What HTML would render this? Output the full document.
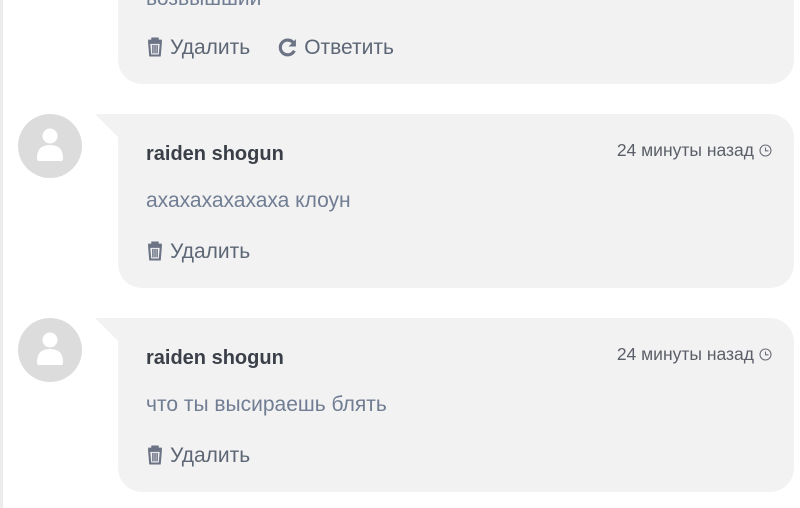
<!DOCTYPE html>
<html><head><meta charset="utf-8"><style>
*{margin:0;padding:0;box-sizing:border-box}
body{width:800px;height:508px;background:#fff;position:relative;overflow:hidden;font-family:"Liberation Sans",sans-serif}
.line{position:absolute;left:0;top:0;width:3px;height:508px;background:#ececec}
.card{position:absolute;left:118px;width:676px;background:#f2f2f3;border-radius:0 24px 24px 24px}
.notch{position:absolute;left:-23px;top:0;width:0;height:0;border-top:23px solid #f2f2f3;border-left:23px solid transparent}
.av{position:absolute;left:18px;width:64px;height:64px;border-radius:50%;background:#dcdcdc}
.av svg{position:absolute;left:18px;top:14px}
.name{position:absolute;left:28px;top:29px;font-size:20px;font-weight:bold;color:#3b3f48}
.time{position:absolute;right:22px;top:26px;font-size:17.5px;color:#5b5f67}
.time svg{vertical-align:-1px;margin-left:5px}
.text{position:absolute;left:28px;top:75px;font-size:21px;color:#707d92}
.act{position:absolute;left:28px;font-size:21px;color:#5d6675}
.act svg{vertical-align:-3px;margin-right:6px}
</style></head><body>
<div class="line"></div>
<div class="card" style="top:-40px;height:124px;border-radius:24px">
 <div class="text" style="top:27px">возвышший</div>
 <div class="act" style="top:76px"><svg width="18" height="21" viewBox="0 0 17 19"><path d="M2 4h13M6 4V2h5v2M3 6l1 12h9l1-12z" fill="none" stroke="#6b7384" stroke-width="2"/><path d="M6.5 8v8M8.5 8v8M10.5 8v8" stroke="#6b7384" stroke-width="1.4"/></svg>Удалить<span style="margin-left:28px"><svg width="20" height="20" viewBox="0 0 19 19"><path d="M15 6A7 7 0 1 0 15.5 13" fill="none" stroke="#6b7384" stroke-width="3"/><path d="M17 2v7h-7z" fill="#6b7384"/></svg></span>Ответить</div>
</div>
<div class="av" style="top:114px"><svg width="28" height="36" viewBox="0 0 28 36"><circle cx="14" cy="8" r="7.5" fill="#fff"/><path d="M1 30q0-13 13-13t13 13v1q0 2-2 2H3q-2 0-2-2z" fill="#fff"/></svg></div>
<div class="card" style="top:114px;height:174px"><div class="notch"></div>
 <div class="name">raiden shogun</div>
 <div class="time">24 минуты назад<svg width="13" height="13" viewBox="0 0 13 13"><circle cx="6.5" cy="6.5" r="5.5" fill="none" stroke="#6b6f77" stroke-width="1.1"/><path d="M6.5 3.5v3.3h3" fill="none" stroke="#6b6f77" stroke-width="1.1"/></svg></div>
 <div class="text">ахахахахахаха клоун</div>
 <div class="act" style="top:126px"><svg width="18" height="21" viewBox="0 0 17 19"><path d="M2 4h13M6 4V2h5v2M3 6l1 12h9l1-12z" fill="none" stroke="#6b7384" stroke-width="2"/><path d="M6.5 8v8M8.5 8v8M10.5 8v8" stroke="#6b7384" stroke-width="1.4"/></svg>Удалить</div>
</div>
<div class="av" style="top:318px"><svg width="28" height="36" viewBox="0 0 28 36"><circle cx="14" cy="8" r="7.5" fill="#fff"/><path d="M1 30q0-13 13-13t13 13v1q0 2-2 2H3q-2 0-2-2z" fill="#fff"/></svg></div>
<div class="card" style="top:318px;height:174px"><div class="notch"></div>
 <div class="name">raiden shogun</div>
 <div class="time">24 минуты назад<svg width="13" height="13" viewBox="0 0 13 13"><circle cx="6.5" cy="6.5" r="5.5" fill="none" stroke="#6b6f77" stroke-width="1.1"/><path d="M6.5 3.5v3.3h3" fill="none" stroke="#6b6f77" stroke-width="1.1"/></svg></div>
 <div class="text">что ты высираешь блять</div>
 <div class="act" style="top:126px"><svg width="18" height="21" viewBox="0 0 17 19"><path d="M2 4h13M6 4V2h5v2M3 6l1 12h9l1-12z" fill="none" stroke="#6b7384" stroke-width="2"/><path d="M6.5 8v8M8.5 8v8M10.5 8v8" stroke="#6b7384" stroke-width="1.4"/></svg>Удалить</div>
</div>
</body></html>
